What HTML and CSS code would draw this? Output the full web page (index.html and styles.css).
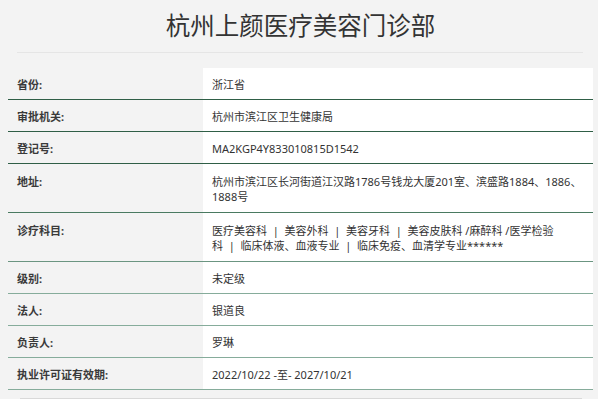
FILE: index.html
```html
<!DOCTYPE html>
<html lang="zh-CN">
<head>
<meta charset="utf-8">
<title>杭州上颜医疗美容门诊部</title>
<link rel="stylesheet" href="styles.css">
</head>
<body>
<div class="page">
  <h1 class="title">杭州上颜医疗美容门诊部</h1>
  <hr class="rule">
  <table class="info">
    <tbody>
      <tr class="r1"><th>省份:</th><td>浙江省</td></tr>
      <tr class="r2"><th>审批机关:</th><td>杭州市滨江区卫生健康局</td></tr>
      <tr class="r3"><th>登记号:</th><td>MA2KGP4Y833010815D1542</td></tr>
      <tr class="r4"><th>地址:</th><td>杭州市滨江区长河街道江汉路1786号钱龙大厦201室、滨盛路1884、1886、1888号</td></tr>
      <tr class="r5"><th>诊疗科目:</th><td>医疗美容科&nbsp;&nbsp;|&nbsp;&nbsp;美容外科&nbsp;&nbsp;|&nbsp;&nbsp;美容牙科&nbsp;&nbsp;|&nbsp;&nbsp;美容皮肤科 /麻醉科 /医学检验<br>科&nbsp;&nbsp;|&nbsp;&nbsp;临床体液、血液专业&nbsp;&nbsp;|&nbsp;&nbsp;临床免疫、血清学专业******</td></tr>
      <tr class="r6"><th>级别:</th><td>未定级</td></tr>
      <tr class="r7"><th>法人:</th><td>银道良</td></tr>
      <tr class="r8"><th>负责人:</th><td>罗琳</td></tr>
      <tr class="r9"><th>执业许可证有效期:</th><td>2022/10/22 -至- 2027/10/21</td></tr>
    </tbody>
  </table>
  <hr class="rule rule-bottom">
</div>
</body>
</html>
```
FILE: styles.css
```css
html, body {
  margin: 0;
  padding: 0;
  background: #f3f3f3;
}

body {
  font-family: "Noto Sans", "Noto Sans CJK SC", sans-serif;
  color: #333;
}

.page {
  padding: 10px 5px 0 8px;
}

.title {
  margin: 0;
  font-family: "Noto Sans CJK SC", sans-serif;
  font-size: 24.5px;
  font-weight: 400;
  line-height: 30px;
  text-align: center;
  color: #333;
}

.rule {
  border: 0;
  height: 1px;
  background: #e5e5e5;
  margin: 12px 10px 0 9px;
}

.rule-bottom {
  margin: 8px 11px 0 12px;
  background: #d9d9d9;
}

.info {
  width: 100%;
  margin-top: 15px;
  border-collapse: collapse;
  font-size: 11px;
  line-height: 15px;
}

.info th,
.info td {
  padding: 9px 9px 7px 9px;
  vertical-align: top;
  text-align: left;
}

.info th {
  width: 177px;
  font-weight: 700;
  color: #3a3a3a;
  background: #f3f3f3;
}

.info td {
  background: #fff;
  color: #333;
}

.info tr.r4 td,
.info tr.r4 th,
.info tr.r5 td,
.info tr.r5 th {
  padding-top: 10px;
  padding-bottom: 8px;
}

.info tr { border-bottom: 1.5px solid #2f5e46; }
.info tr.r4 { border-bottom-color: #4a7a61; }
.info tr.r5 { border-bottom-color: #6b9581; }
.info tr.r6,
.info tr.r7,
.info tr.r8,
.info tr.r9 { border-bottom-color: #86ac9b; }
```
